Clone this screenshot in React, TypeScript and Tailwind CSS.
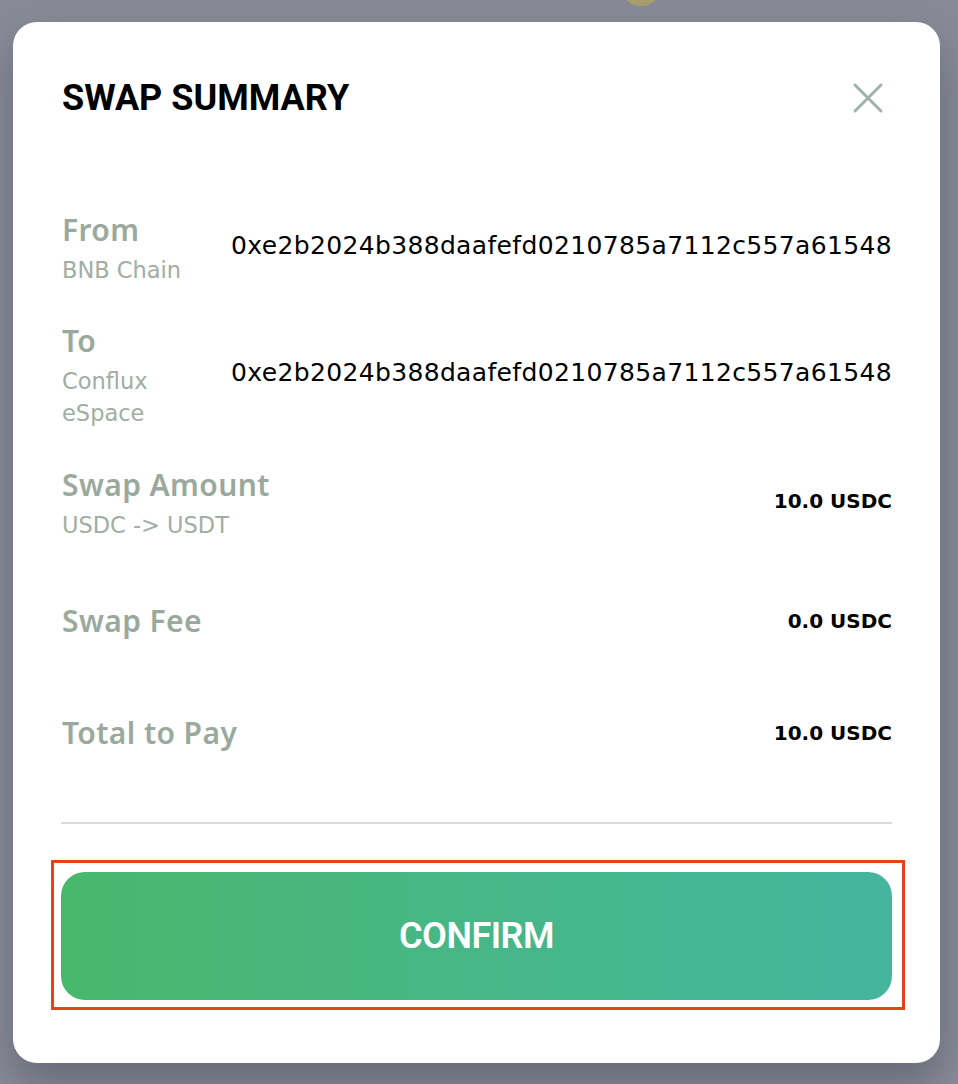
const rows = [
  { label: "From", sub: ["BNB Chain"], value: "0xe2b2024b388daafefd0210785a7112c557a61548", address: true, gap: "mt-[88px]" },
  { label: "To", sub: ["Conflux", "eSpace"], value: "0xe2b2024b388daafefd0210785a7112c557a61548", address: true, gap: "mt-[31px]" },
  { label: "Swap Amount", sub: ["USDC -> USDT"], value: "10.0 USDC", address: false, gap: "mt-[32px]" },
  { label: "Swap Fee", sub: [], value: "0.0 USDC", address: false, gap: "mt-[56px]" },
  { label: "Total to Pay", sub: [], value: "10.0 USDC", address: false, gap: "mt-[64px]" },
];

function CloseIcon() {
  return (
    <svg width="32" height="32" viewBox="0 0 32 32" fill="none">
      <path d="M3 3L29 29M29 3L3 29" stroke="#a0b1a9" strokeWidth="3" strokeLinecap="round" />
    </svg>
  );
}

export default function App() {
  return (
    <div className="relative w-[958px] h-[1084px] overflow-hidden bg-[#888b97]">
      {/* coin peeking behind the backdrop */}
      <div className="absolute left-[622px] top-[-30px] w-[38px] h-[36px] rounded-full bg-[#a89d6c]" />

      <div className="relative ml-[13px] mt-[22px] w-[927px] h-[1041px] rounded-[24px] bg-white shadow-[0_20px_40px_rgba(40,44,60,0.35)] px-12 pt-[56px] flex flex-col">
        {/* Header */}
        <div className="flex items-center justify-between h-[40px]">
          <h2 className="ml-px font-['Roboto',sans-serif] font-bold text-[36px] leading-[40px] text-black whitespace-nowrap">
            SWAP SUMMARY
          </h2>
          <button className="mr-[8px] flex items-center justify-center w-[32px] h-[32px]">
            <CloseIcon />
          </button>
        </div>

        {/* Details */}
        {rows.map((row) => (
          <div key={row.label} className={`${row.gap} flex items-center justify-between`}>
            <div className="w-[165px] pl-px whitespace-nowrap">
              <div className="font-['Noto_Sans',sans-serif] font-semibold text-[30px] leading-[48px] tracking-[0.4px] text-[#9aa99d]">
                {row.label}
              </div>
              {row.sub.map((s) => (
                <div key={s} className="font-['DejaVu_Sans',sans-serif] text-[22.5px] leading-[32px] text-[#a0aea4]">
                  {s}
                </div>
              ))}
            </div>
            {row.address ? (
              <div className="font-['DejaVu_Sans',sans-serif] text-[25px] tracking-[0.35px] text-black whitespace-nowrap">
                {row.value}
              </div>
            ) : (
              <div className="font-['DejaVu_Sans',sans-serif] font-bold text-[20px] text-black whitespace-nowrap">
                {row.value}
              </div>
            )}
          </div>
        ))}

        <div className="mt-[65px] h-[2px] bg-[#d8dcd9]" />

        {/* Confirm */}
        <div className="relative mt-[48px]">
          <div className="absolute left-[-10px] right-[-13px] top-[-12px] bottom-[-10px] border-[3px] border-[#e9401b]" />
          <button className="relative w-full h-[128px] rounded-[24px] bg-gradient-to-r from-[#48b86c] to-[#46b59f] text-white font-['Roboto',sans-serif] font-semibold text-[36px] tracking-[-0.5px]">
            CONFIRM
          </button>
        </div>
      </div>
    </div>
  );
}
